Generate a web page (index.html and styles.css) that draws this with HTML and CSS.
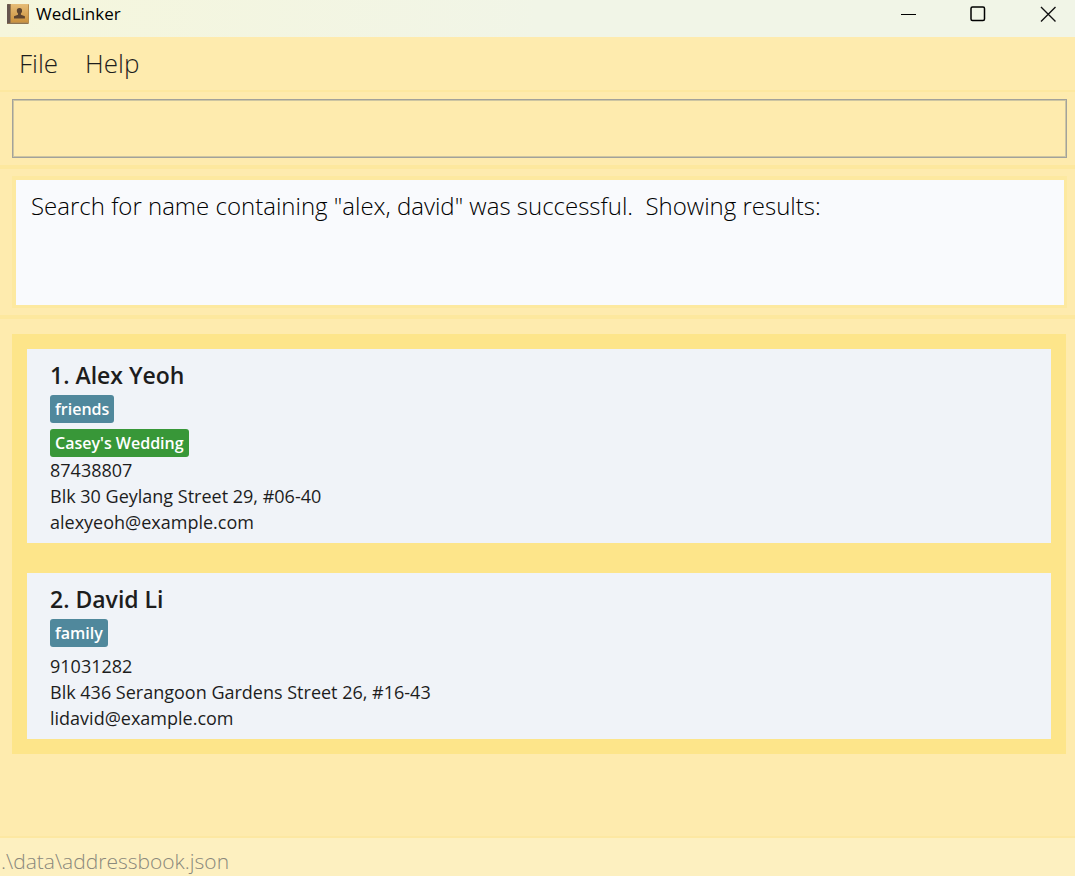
FILE: index.html
```html
<!DOCTYPE html>
<html lang="en">
<head>
<meta charset="utf-8">
<meta name="viewport" content="width=device-width, initial-scale=1">
<title>WedLinker</title>
<link rel="stylesheet" href="styles.css">
</head>
<body>
<div class="window">
  <header class="titlebar">
    <svg class="app-icon" width="22" height="22" viewBox="0 0 22 22" aria-hidden="true">
      <defs>
        <linearGradient id="cover" x1="0" y1="0" x2="0" y2="1">
          <stop offset="0" stop-color="#e6bd78"/>
          <stop offset="1" stop-color="#cb923e"/>
        </linearGradient>
      </defs>
      <rect x="0" y="1" width="22" height="20" rx="1" fill="#b98d4d"/>
      <rect x="4" y="1" width="17" height="18" fill="url(#cover)"/>
      <rect x="0" y="1" width="3" height="20" rx="1" fill="#66564f"/>
      <rect x="3" y="1" width="1" height="20" fill="#98764a"/>
      <rect x="1" y="20" width="20" height="1" fill="#8d7351"/>
      <path d="M12.500 5c1.900 0 2.700 1.300 2.600 3-.1 1.200-.6 2-1.200 2.600v1.200l4 1.500v2.200H7v-2.200l4-1.500v-1.200c-.7-.6-1.100-1.400-1.200-2.600C9.700 6.300 10.600 5 12.500 5z" fill="#5c4430"/>
    </svg>
    <h1 class="title">WedLinker</h1>
    <div class="controls">
      <button class="control" type="button" aria-label="Minimize"><svg width="16" height="16" viewBox="0 0 16 16"><path d="M1 8.500h15" stroke="#000" fill="none"/></svg></button>
      <button class="control" type="button" aria-label="Maximize"><svg width="16" height="16" viewBox="0 0 16 16"><rect x="1" y="1" width="13.500" height="13.500" rx="1.500" stroke="#000" stroke-width="1.500" fill="none"/></svg></button>
      <button class="control" type="button" aria-label="Close"><svg width="16" height="16" viewBox="0 0 16 16"><path d="M1 1l14.500 14.500M15.500 1L1 15.500" stroke="#111" stroke-width="1.400" fill="none"/></svg></button>
    </div>
  </header>
  <nav class="menubar">
    <button class="menu" type="button">File</button>
    <button class="menu" type="button">Help</button>
  </nav>
  <section class="command">
    <input class="command-box" type="text" aria-label="Command">
  </section>
  <section class="result">
    <textarea class="result-box" readonly aria-label="Result">Search for name containing "alex, david" was successful.  Showing results:</textarea>
  </section>
  <main class="people">
    <ol class="list">
      <li class="card">
        <h2 class="name">1. Alex Yeoh</h2>
        <div class="tags"><span class="tag">friends</span></div>
        <div class="weddings"><span class="tag wedding">Casey's Wedding</span></div>
        <p class="detail">87438807</p>
        <p class="detail">Blk 30 Geylang Street 29, #06-40</p>
        <p class="detail">alexyeoh@example.com</p>
      </li>
      <li class="card">
        <h2 class="name">2. David Li</h2>
        <div class="tags"><span class="tag">family</span></div>
        <p class="detail">91031282</p>
        <p class="detail">Blk 436 Serangoon Gardens Street 26, #16-43</p>
        <p class="detail">lidavid@example.com</p>
      </li>
    </ol>
  </main>
  <footer class="statusbar">.\data\addressbook.json</footer>
</div>
</body>
</html>
```
FILE: styles.css
```css
* { box-sizing: border-box; }
body {
  margin: 0;
  font-family: "Open Sans", "Noto Sans", sans-serif;
  color: #1d1d1d;
}
h1, h2, p, ol { margin: 0; padding: 0; }
button { border: 0; background: none; padding: 0; color: inherit; font-family: inherit; }
.window {
  display: flex;
  flex-direction: column;
  min-height: 100vh;
  background: #feebae;
}
.titlebar {
  display: flex;
  align-items: center;
  height: 37px;
  padding: 0 0 9px 7px;
  background: linear-gradient(90deg, #f5f6dc, #f1f5e7 50%);
}
.title {
  margin-left: 7px;
  font-size: 17px;
  font-weight: 400;
  line-height: 24px;
  color: #000;
}
.controls { display: flex; margin-left: auto; gap: 16px; }
.control { display: grid; place-items: center; width: 54px; height: 28px; }
.menubar {
  display: flex;
  gap: 27px;
  padding: 7px 19px 8px;
  border-bottom: 2px solid #fde8a0;
}
.menu { font-size: 26px; font-weight: 300; line-height: 38px; }
.command { padding: 7px 8px 7px 12px; border-bottom: 4px solid #fde89e; }
.command-box {
  display: block;
  width: 100%;
  height: 59px;
  padding: 0 16px;
  border: 1px solid #a2a29b;
  box-shadow: inset 0 0 0 1px #cdc5a2;
  background: #feebae;
  font: 300 24px "Open Sans", sans-serif;
}
.result { padding: 7px 8px 7px 12px; border-bottom: 4px solid #fde89e; }
.result-box {
  display: block;
  width: 100%;
  height: 132px;
  padding: 8px 15px;
  border: 3px solid #fde9a0;
  border-width: 4px 3px 3px 4px;
  outline: 0;
  resize: none;
  background: #f9fafd;
  color: #000;
  font: 300 24px/36px "Open Sans", sans-serif;
}
.people { flex: 1; padding: 15px 9px 15px 12px; }
.list {
  display: grid;
  gap: 30px;
  padding: 15px;
  background: #fde58a;
  list-style: none;
}
.card { padding: 10px 23px 8px; background: #f0f3f8; }
.name { font-size: 23px; font-weight: 600; line-height: 32px; }
.tags { display: flex; padding: 4px 0 6px; }
.weddings { display: flex; }
.tag {
  padding: 0 5px;
  border-radius: 3px;
  background: #50889c;
  color: #fff;
  font-size: 16px;
  font-weight: 600;
  line-height: 28px;
}
.wedding { background: #389738; }
.detail { font-size: 18px; line-height: 26px; }
.statusbar {
  border-top: 2px solid #fde8a2;
  background: #fdf0c0;
  padding: 8px 1px 0;
  color: #8a887c;
  font-size: 21px;
  font-weight: 300;
  line-height: 30px;
}
```
